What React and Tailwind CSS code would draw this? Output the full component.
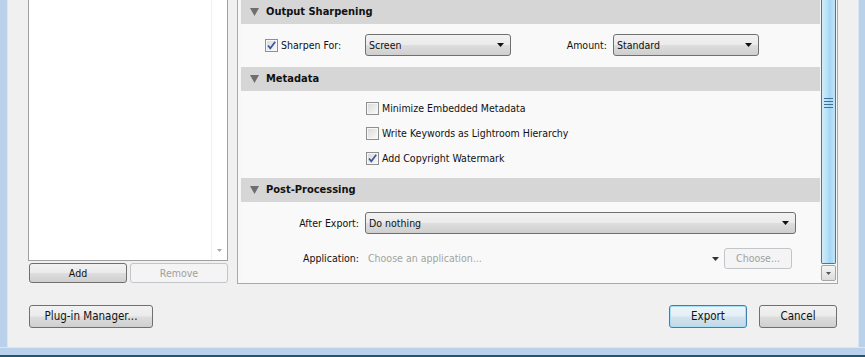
import React from "react";

const btnBg =
  "bg-[linear-gradient(to_bottom,#f2f2f2_0%,#ebebeb_48%,#dddddd_52%,#cfcfcf_100%)]";

function Check({ checked }) {
  return (
    <div className="w-[13px] h-[13px] shrink-0 border border-[#8e8f8f] bg-[linear-gradient(135deg,#d8d8d8_0%,#f4f4f4_80%)] shadow-[inset_0_0_0_1px_#f7f7f7] flex items-center justify-center">
      {checked && (
        <svg width="11" height="11" viewBox="0 0 11 11">
          <path d="M2 5.5 L4.3 8.3 L9.2 1.8" fill="none" stroke="#3a55a0" strokeWidth="1.7" />
        </svg>
      )}
    </div>
  );
}

function Arrow({ color = "#111" }) {
  return (
    <svg width="7" height="4" viewBox="0 0 7 4" className="shrink-0">
      <polygon points="0,0 7,0 3.5,4" fill={color} />
    </svg>
  );
}

function Dropdown({ value, w }) {
  return (
    <div
      className={`${w} h-[22px] shrink-0 border border-[#707070] rounded-[3px] ${btnBg} flex items-center pl-[3px] pr-[6px]`}
    >
      <span className="flex-1 pt-[1px] text-[#111]">{value}</span>
      <Arrow />
    </div>
  );
}

function Header({ title }) {
  return (
    <div className="h-[24px] bg-[#d6d6d6] flex items-center pl-[9px] shrink-0">
      <svg width="9" height="8" viewBox="0 0 9 8" className="mr-[7px]">
        <polygon points="0,0 9,0 4.5,8" fill="#6e6e6e" />
      </svg>
      <span className="font-bold pt-[1px] text-[11px] text-[#111]">{title}</span>
    </div>
  );
}

export default function App() {
  return (
    <div className="w-[865px] h-[357px] flex flex-col overflow-hidden font-['DejaVu_Sans_Condensed','Liberation_Sans',Arial,sans-serif] text-[10.5px] text-[#1a1a1a] select-none">
      <div className="flex flex-1 min-h-0">
        {/* left window frame */}
        <div className="w-[8px] bg-[#b9d1ea] border-r border-[#d9e5f2]" />
        {/* client area */}
        <div className="flex-1 bg-[#f0f0f0] flex flex-col">
          <div className="flex h-[284px] pl-[20px] pr-[20px] gap-[9px]">
            {/* left column */}
            <div className="w-[200px] flex flex-col">
              <div className="h-[261px] bg-white border border-t-0 border-[#a0a0a0] flex">
                <div className="flex-1" />
                <div className="w-[16px] border-l border-[#f0f0f0] flex flex-col justify-end items-center pb-[8px]">
                  <svg width="5" height="3" viewBox="0 0 5 3">
                    <polygon points="0,0 5,0 2.5,3" fill="#a8a8a8" />
                  </svg>
                </div>
              </div>
              <div className="flex gap-[3px] pl-[1px] mt-[2px]">
                <div className={`w-[98px] h-[20px] pt-[1px] border border-[#707070] rounded-[3px] ${btnBg} flex items-center justify-center text-[#111]`}>
                  Add
                </div>
                <div className="w-[98px] h-[20px] pt-[1px] border border-[#c2c5c9] rounded-[3px] bg-[#f4f4f4] flex items-center justify-center text-[#a0a0a0]">
                  Remove
                </div>
              </div>
            </div>
            {/* right panel */}
            <div className="w-[601px] h-[284px] border border-t-0 border-[#a9a9a9] bg-[#f7f7f7] flex pl-[3px]">
              <div className="w-[579px] flex flex-col bg-[#f9f9f9]">
                <Header title="Output Sharpening" />
                <div className="h-[43px] pt-[10px] flex items-start">
                  <div className="w-[124px] pl-[24px] flex items-center h-[22px]">
                    <Check checked />
                    <span className="ml-[3px] pt-[1px] text-[#111]">Sharpen For:</span>
                  </div>
                  <Dropdown value="Screen" w="w-[146px]" />
                  <div className="w-[102px] h-[22px] pt-[1px] flex items-center justify-end pr-[6px] text-[#111]">
                    Amount:
                  </div>
                  <Dropdown value="Standard" w="w-[146px]" />
                </div>
                <Header title="Metadata" />
                <div className="h-[87px] pt-[5px] pl-[125px] flex flex-col">
                  {[
                    ["Minimize Embedded Metadata", false],
                    ["Write Keywords as Lightroom Hierarchy", false],
                    ["Add Copyright Watermark", true],
                  ].map(([t, c]) => (
                    <div key={t} className="h-[25px] flex items-center">
                      <Check checked={c} />
                      <span className="ml-[3px] pt-[1px] text-[#111]">{t}</span>
                    </div>
                  ))}
                </div>
                <Header title="Post-Processing" />
                <div className="flex-1 pt-[10px] flex flex-col">
                  <div className="flex items-center h-[22px]">
                    <div className="w-[118px] mr-[6px] pt-[1px] text-right text-[#111]">After Export:</div>
                    <Dropdown value="Do nothing" w="w-[431px]" />
                  </div>
                  <div className="flex items-center h-[21px] mt-[14px]">
                    <div className="w-[118px] mr-[6px] pt-[1px] text-right text-[#111]">Application:</div>
                    <div className="w-[427px] flex items-center">
                      <span className="flex-1 pl-[3px] pt-[1px] text-[#a3a3a3]">Choose an application...</span>
                      <div className="mr-[5px]">
                        <Arrow color="#333" />
                      </div>
                      <div className="w-[68px] h-[21px] pt-[1px] border border-[#c2c5c9] rounded-[3px] bg-[#f4f4f4] flex items-center justify-center text-[#a0a0a0]">
                        Choose...
                      </div>
                    </div>
                  </div>
                </div>
              </div>
              {/* scrollbar */}
              <div className="w-[15px] ml-[1px] flex flex-col">
                <div className="h-[264px] border border-t-0 border-[#3c78a8] rounded-b-[2px] bg-[linear-gradient(to_right,#d2ecfa_0%,#b4e0f7_45%,#a3d6f3_55%,#bfe3f8_100%)] flex flex-col items-center">
                  <div className="mt-[98px] flex flex-col gap-[2px]">
                    {[0, 1, 2, 3].map((i) => (
                      <div key={i} className="w-[9px] h-[1px] bg-[#3e6f96]" />
                    ))}
                  </div>
                </div>
                <div className="h-[16px] mt-[1px] border border-[#a5a5a5] rounded-[2px] bg-[linear-gradient(to_bottom,#f5f5f5,#dcdcdc)] flex items-center justify-center">
                  <svg width="5" height="3" viewBox="0 0 5 3">
                    <polygon points="0,0 5,0 2.5,3" fill="#555" />
                  </svg>
                </div>
              </div>
            </div>
          </div>
          {/* bottom buttons */}
          <div className="flex items-center mt-[21px] pl-[21px] pr-[21px]">
            <div className={`w-[124px] h-[23px] border border-[#707070] rounded-[3px] ${btnBg} flex items-center justify-center text-[11.5px] text-[#111]`}>
              Plug-in Manager...
            </div>
            <div className="flex-1" />
            <div className="w-[78px] h-[23px] border border-[#3c7fb1] rounded-[3px] bg-[linear-gradient(to_bottom,#eef5fa_0%,#e3eef6_48%,#d3e3ee_52%,#c4d8e6_100%)] shadow-[inset_0_0_0_1px_#a8def7] flex items-center justify-center text-[11.5px] text-[#111]">
              Export
            </div>
            <div className={`w-[78px] h-[23px] ml-[12px] border border-[#707070] rounded-[3px] ${btnBg} flex items-center justify-center text-[11.5px] text-[#111]`}>
              Cancel
            </div>
          </div>
        </div>
        {/* right frame */}
        <div className="w-[7px] bg-[#b9d1ea] border-l border-[#d9e5f2]" />
      </div>
      <div className="h-[8px] bg-[#b9d1ea] border-t border-[#d9e5f2]" />
      <div className="h-[2px] bg-[#24546f]" />
    </div>
  );
}
